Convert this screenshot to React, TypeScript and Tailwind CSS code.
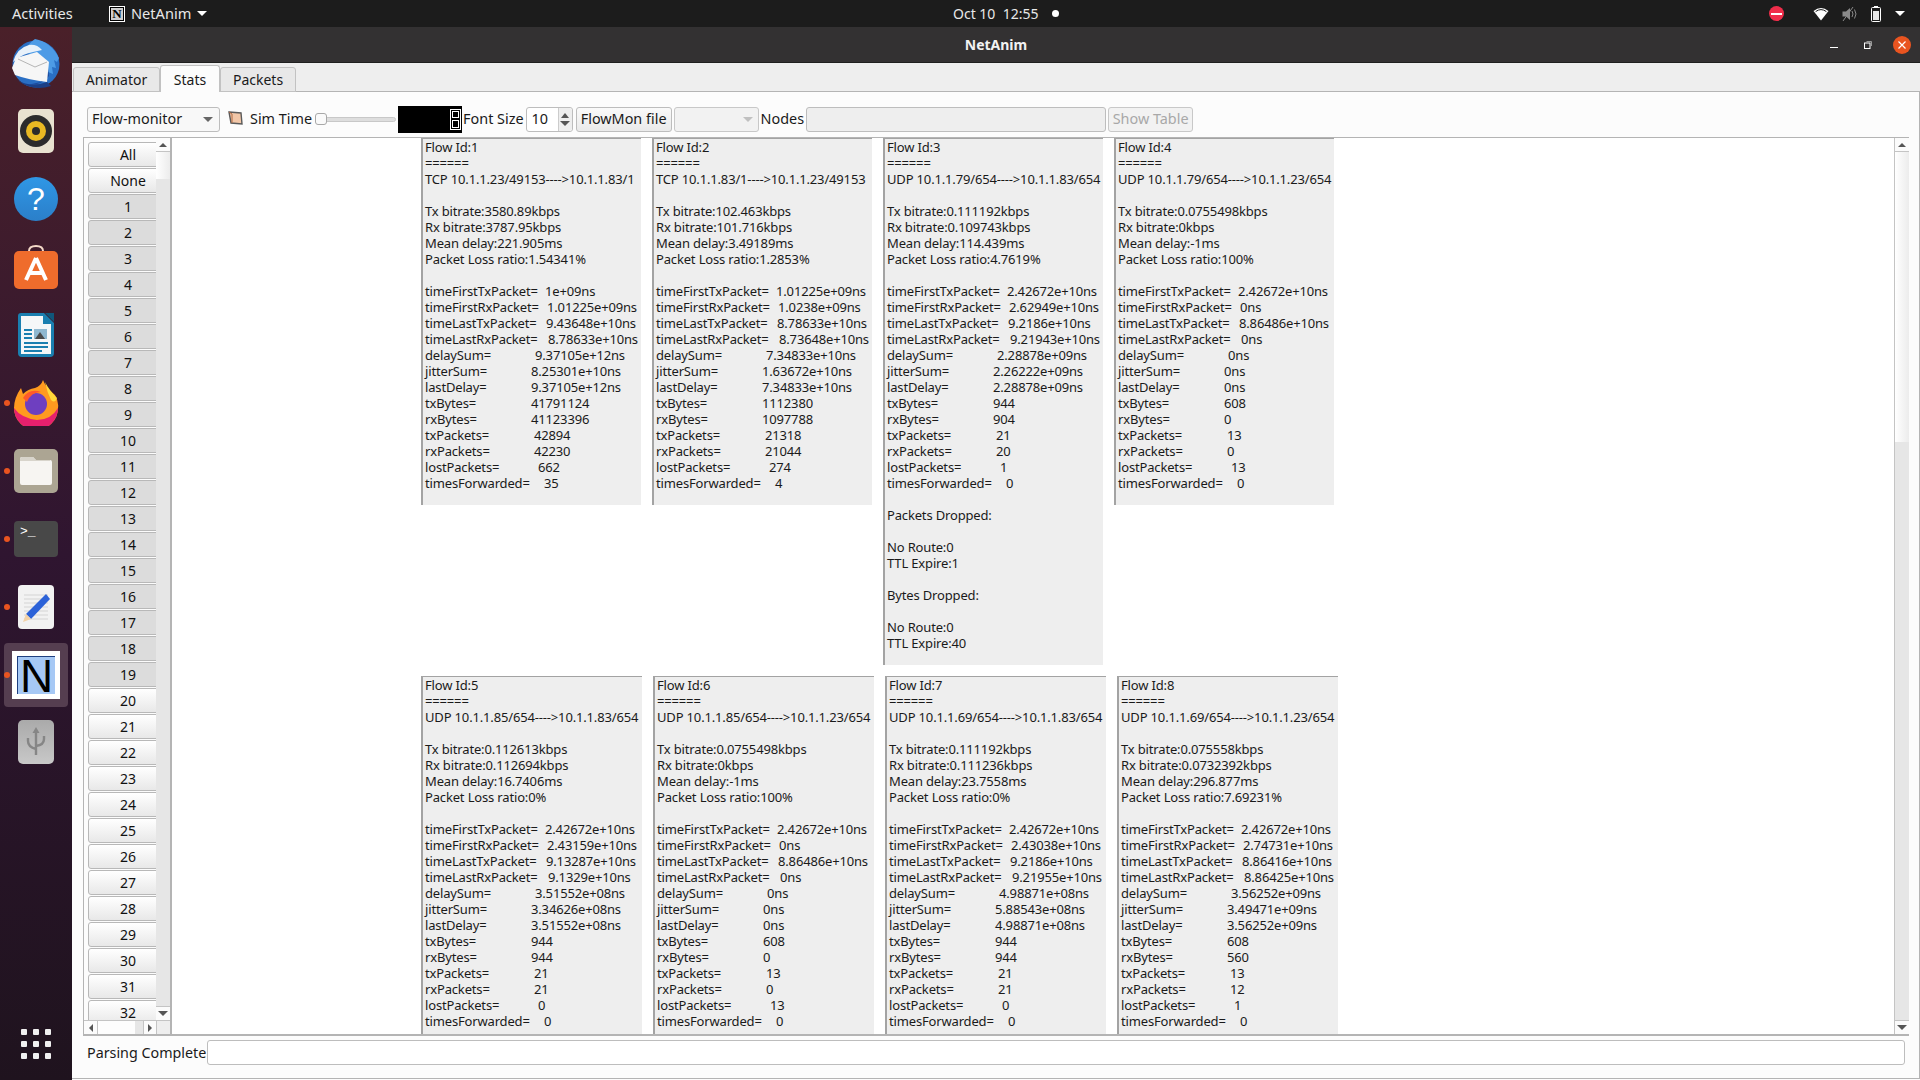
const labelWidths: Record<string, string> = {
  'timeFirstTxPacket=': 'w-[120px]',
  'timeFirstRxPacket=': 'w-[122px]',
  'timeLastTxPacket=': 'w-[121px]',
  'timeLastRxPacket=': 'w-[123px]',
  'delaySum=': 'w-[110px]',
  'jitterSum=': 'w-[106px]',
  'lastDelay=': 'w-[106px]',
  'txBytes=': 'w-[106px]',
  'rxBytes=': 'w-[106px]',
  'txPackets=': 'w-[109px]',
  'rxPackets=': 'w-[109px]',
  'lostPackets=': 'w-[113px]',
  'timesForwarded=': 'w-[119px]',
}

const statLabels = Object.keys(labelWidths)

type Flow = {
  id: number
  route: string
  tx: string
  rx: string
  delay: string
  loss: string
  stats: string[]
  dropped?: boolean
}

const flows: Flow[] = [
  { id: 1, route: 'TCP 10.1.1.23/49153---->10.1.1.83/1', tx: '3580.89', rx: '3787.95', delay: '221.905', loss: '1.54341', stats: ['1e+09ns', '1.01225e+09ns', '9.43648e+10ns', '8.78633e+10ns', '9.37105e+12ns', '8.25301e+10ns', '9.37105e+12ns', '41791124', '41123396', '42894', '42230', '662', '35'] },
  { id: 2, route: 'TCP 10.1.1.83/1---->10.1.1.23/49153', tx: '102.463', rx: '101.716', delay: '3.49189', loss: '1.2853', stats: ['1.01225e+09ns', '1.0238e+09ns', '8.78633e+10ns', '8.73648e+10ns', '7.34833e+10ns', '1.63672e+10ns', '7.34833e+10ns', '1112380', '1097788', '21318', '21044', '274', '4'] },
  { id: 3, route: 'UDP 10.1.1.79/654---->10.1.1.83/654', tx: '0.111192', rx: '0.109743', delay: '114.439', loss: '4.7619', stats: ['2.42672e+10ns', '2.62949e+10ns', '9.2186e+10ns', '9.21943e+10ns', '2.28878e+09ns', '2.26222e+09ns', '2.28878e+09ns', '944', '904', '21', '20', '1', '0'], dropped: true },
  { id: 4, route: 'UDP 10.1.1.79/654---->10.1.1.23/654', tx: '0.0755498', rx: '0', delay: '-1', loss: '100', stats: ['2.42672e+10ns', '0ns', '8.86486e+10ns', '0ns', '0ns', '0ns', '0ns', '608', '0', '13', '0', '13', '0'] },
  { id: 5, route: 'UDP 10.1.1.85/654---->10.1.1.83/654', tx: '0.112613', rx: '0.112694', delay: '16.7406', loss: '0', stats: ['2.42672e+10ns', '2.43159e+10ns', '9.13287e+10ns', '9.1329e+10ns', '3.51552e+08ns', '3.34626e+08ns', '3.51552e+08ns', '944', '944', '21', '21', '0', '0'] },
  { id: 6, route: 'UDP 10.1.1.85/654---->10.1.1.23/654', tx: '0.0755498', rx: '0', delay: '-1', loss: '100', stats: ['2.42672e+10ns', '0ns', '8.86486e+10ns', '0ns', '0ns', '0ns', '0ns', '608', '0', '13', '0', '13', '0'] },
  { id: 7, route: 'UDP 10.1.1.69/654---->10.1.1.83/654', tx: '0.111192', rx: '0.111236', delay: '23.7558', loss: '0', stats: ['2.42672e+10ns', '2.43038e+10ns', '9.2186e+10ns', '9.21955e+10ns', '4.98871e+08ns', '5.88543e+08ns', '4.98871e+08ns', '944', '944', '21', '21', '0', '0'] },
  { id: 8, route: 'UDP 10.1.1.69/654---->10.1.1.23/654', tx: '0.075558', rx: '0.0732392', delay: '296.877', loss: '7.69231', stats: ['2.42672e+10ns', '2.74731e+10ns', '8.86416e+10ns', '8.86425e+10ns', '3.56252e+09ns', '3.49471e+09ns', '3.56252e+09ns', '608', '560', '13', '12', '1', '0'] },
]

function FlowCard({ flow, className }: { flow: Flow; className: string }) {
  return (
    <div className={`shrink-0 bg-[#eeeeee] border-l-2 border-t border-[#a3a3a3] pl-[2px] text-[13px] leading-4 text-[#1a1a1a] whitespace-pre tracking-[-0.16px] ${className}`}>
      <div>Flow Id:{flow.id}</div>
      <div>======</div>
      <div>{flow.route}</div>
      <div className="h-4" />
      <div>Tx bitrate:{flow.tx}kbps</div>
      <div>Rx bitrate:{flow.rx}kbps</div>
      <div>Mean delay:{flow.delay}ms</div>
      <div>Packet Loss ratio:{flow.loss}%</div>
      <div className="h-4" />
      {statLabels.map((label, i) => (
        <div key={label} className="flex">
          <span className={`shrink-0 ${labelWidths[label]}`}>{label}</span>
          <span>{flow.stats[i]}</span>
        </div>
      ))}
      {flow.dropped && (
        <>
          <div className="h-4" />
          <div>Packets Dropped:</div>
          <div className="h-4" />
          <div>No Route:0</div>
          <div>TTL Expire:1</div>
          <div className="h-4" />
          <div>Bytes Dropped:</div>
          <div className="h-4" />
          <div>No Route:0</div>
          <div>TTL Expire:40</div>
        </>
      )}
    </div>
  )
}

function Caret({ className = '' }: { className?: string }) {
  return <span className={`inline-block w-0 h-0 border-l-[5px] border-r-[5px] border-t-[5px] border-l-transparent border-r-transparent ${className}`} />
}

function TopBar() {
  return (
    <div className="h-[27px] shrink-0 bg-[#1c1c1c] flex items-center text-[14.6px] text-[#e8e8e8] relative">
      <span className="ml-3 w-[97px]">Activities</span>
      <span className="w-4 h-4 bg-white flex items-center justify-center mr-[6px]">
        <span className="w-[14px] h-[14px] bg-[#cfcfcf] border border-black text-black text-[13px] leading-[12px] font-bold text-center font-['Liberation_Serif',serif]">N</span>
      </span>
      <span>NetAnim</span>
      <Caret className="ml-[6px] border-t-white" />
      <div className="absolute left-[953px] top-0 h-full flex items-center whitespace-pre text-[14px]">
        <span>Oct 10  12:55</span>
        <span className="ml-[14px] w-[7px] h-[7px] rounded-full bg-white" />
      </div>
      <div className="ml-auto flex items-center mr-[15px]">
        <span className="w-[15px] h-[15px] rounded-full bg-[#ef2d4a] flex items-center justify-center mr-[29px]">
          <span className="w-[11px] h-[2px] bg-white" />
        </span>
        <svg width="16" height="14" viewBox="0 0 16 14" className="mr-[13px]">
          <path d="M0.5 4 Q8 -2 15.5 4 L8 13.5 Z" fill="#fff" />
          <path d="M2.6 4.6 Q8 0.6 13.4 4.6" fill="none" stroke="#1c1c1c" strokeWidth="1" />
        </svg>
        <svg width="16" height="14" viewBox="0 0 16 14" className="mr-[13px]">
          <path d="M0.5 4.5 H4 L8 1 V13 L4 9.5 H0.5 Z" fill="#8a8a8a" />
          <path d="M10 4 Q12 7 10 10 M12.5 2.5 Q15.5 7 12.5 11.5" fill="none" stroke="#8a8a8a" />
          <path d="M1 14 L11 0" stroke="#8a8a8a" />
        </svg>
        <svg width="10" height="16" viewBox="0 0 10 16" className="mr-[14px]">
          <rect x="3" y="0" width="4" height="2" fill="#fff" />
          <rect x="0.5" y="1.5" width="9" height="14" rx="1" fill="none" stroke="#fff" />
          <rect x="2" y="5" width="6" height="9" fill="#e6e6e6" />
        </svg>
        <Caret className="border-t-white" />
      </div>
    </div>
  )
}

function DockItem({ children, dot, h = 'h-[68px]' }: { children: React.ReactNode; dot?: boolean; h?: string }) {
  return (
    <div className={`relative flex items-center justify-center shrink-0 ${h}`}>
      {dot && <span className="absolute left-[4px] top-1/2 -mt-[3px] w-[6px] h-[6px] rounded-full bg-[#e95420]" />}
      {children}
    </div>
  )
}

function Dock() {
  return (
    <div className="w-[72px] shrink-0 bg-gradient-to-b from-[#4a2029] via-[#2f1530] to-[#1f131e] flex flex-col pt-[2px] relative">
      <DockItem>
        <svg width="50" height="50" viewBox="0 0 50 50">
          <circle cx="25" cy="26" r="23.5" fill="#2a6fc4" />
          <path d="M24 1 Q40 4 48 20 L46 24 L43 22 L45 30 L41 29 L42 36 L37 34 L36 42 Q30 38 28 30 Q26 18 13 13 Q18 5 24 1 Z" fill="#4d9be6" />
          <path d="M6 42 Q20 50 36 44 L40 48 Q22 54 6 42 Z" fill="#1b3f86" />
          <path d="M16 47 Q30 48 38 38 L37 30 L30 44 Z" fill="#1d4a9c" />
          <path d="M2 24 Q6 10 18 7 Q26 6 31 12 L22 14 Q12 16 6 21 Z" fill="#e8f1fa" />
          <path d="M1 30 L5 20 L26 14 L38 24 L36 44 Q18 42 4 37 Z" fill="#f6f6f6" />
          <path d="M7 21 L24 29 L36 24" fill="none" stroke="#b5b5b5" strokeWidth="1" />
        </svg>
      </DockItem>
      <DockItem>
        <div className="w-9 h-11 rounded-[5px] bg-[#e8e2d0] flex items-center justify-center">
          <div className="w-8 h-8 rounded-full bg-[#2b2b2b] flex items-center justify-center">
            <div className="w-5 h-5 rounded-full bg-[#e8b923] flex items-center justify-center">
              <div className="w-2 h-2 rounded-full bg-[#2b2b2b]" />
            </div>
          </div>
        </div>
      </DockItem>
      <DockItem>
        <div className="w-11 h-11 rounded-full bg-gradient-to-b from-[#2f97e6] to-[#2b7fc9] flex items-center justify-center text-white text-[32px] leading-none font-['Liberation_Sans',sans-serif]">?</div>
      </DockItem>
      <DockItem>
        <svg width="44" height="46" viewBox="0 0 44 46">
          <path d="M15 10 V7 Q15 2 22 2 Q29 2 29 7 V10" fill="none" stroke="#f4d9c8" strokeWidth="2" />
          <rect x="0" y="7" width="44" height="38" rx="5" fill="#ef6c2c" />
          <path d="M22 14 L12 36 M22 14 L32 36 M15 29 H29" stroke="#fff" strokeWidth="4" fill="none" />
        </svg>
      </DockItem>
      <DockItem>
        <svg width="36" height="44" viewBox="0 0 36 44">
          <path d="M3 0 H26 L36 10 V40 Q36 44 32 44 H4 Q0 44 0 40 V3 Q0 0 3 0 Z" fill="#1a7fb0" />
          <path d="M3 3 H25 V11 H33 V41 H3 Z" fill="#f5f7f8" />
          <path d="M27 0 H36 V9 Z" fill="#10567b" />
          <rect x="6" y="16" width="8" height="2" fill="#1a7fb0" />
          <rect x="6" y="20" width="8" height="2" fill="#1a7fb0" />
          <rect x="6" y="24" width="8" height="2" fill="#1a7fb0" />
          <rect x="16" y="16" width="13" height="10" fill="#8fb8d0" />
          <path d="M17 26 L22 19 L27 26 Z" fill="#4a4a4a" />
          <rect x="6" y="29" width="24" height="2" fill="#1a7fb0" />
          <rect x="6" y="33" width="24" height="2" fill="#1a7fb0" />
          <rect x="6" y="37" width="18" height="2" fill="#1a7fb0" />
        </svg>
      </DockItem>
      <DockItem dot>
        <svg width="46" height="46" viewBox="0 0 46 46">
          <path d="M30 0 Q33 8 42 15 Q46 22 45 28 A22 22 0 0 1 1 28 Q1 18 8 8 L10 14 Q15 9 22 8 Q28 6 30 0 Z" fill="#ff9a1f" />
          <path d="M1 28 A22 22 0 0 0 45 28 Q38 40 24 40 Q8 38 1 28 Z" fill="#e6206e" />
          <circle cx="23" cy="24" r="11" fill="#6e3fc0" />
          <path d="M10 18 Q16 8 28 12 Q18 12 14 22 Z" fill="#ff5a2a" />
          <path d="M32 2 Q36 10 44 18 Q42 24 38 20 Q34 12 32 2 Z" fill="#ffd93a" />
        </svg>
      </DockItem>
      <DockItem dot>
        <div className="w-11 h-11 rounded-[5px] bg-[#aca593] flex items-center justify-center">
          <svg width="32" height="28" viewBox="0 0 32 28">
            <path d="M2 0 H13 L16 3 H30 Q32 3 32 5 V26 Q32 28 30 28 H2 Q0 28 0 26 V2 Q0 0 2 0 Z" fill="#f7f5f2" />
            <path d="M0 2 Q0 0 2 0 H13 L16 3 H30 V4 H0 Z" fill="#d8d4cb" />
          </svg>
        </div>
      </DockItem>
      <DockItem dot>
        <div className="w-11 h-[36px] rounded-[4px] bg-[#484848] text-white text-[13px] leading-none pl-[6px] pt-[4px] whitespace-pre font-['Liberation_Mono',monospace]">&gt;_</div>
      </DockItem>
      <DockItem dot>
        <svg width="36" height="44" viewBox="0 0 36 44">
          <rect width="36" height="44" rx="4" fill="#f2f2f2" />
          <path d="M6 10 H30 M6 14 H30 M6 18 H30 M6 22 H30 M6 26 H30 M6 30 H30 M6 34 H30" stroke="#d4d4d4" />
          <path d="M28 9 L32 14 L13 34 L8 29 Z" fill="#2c62d8" />
          <path d="M8 29 L13 34 L5 37 Z" fill="#f2d2a8" />
        </svg>
      </DockItem>
      <div className="relative h-[64px] shrink-0 ml-1 mr-1 mt-[2px] rounded-[4px] bg-[#553e50] flex items-center justify-center">
        <span className="absolute -left-0 top-1/2 -mt-[3px] w-[6px] h-[6px] rounded-full bg-[#e95420]" />
        <div className="w-12 h-12 bg-white flex items-center justify-center">
          <div className="w-[38px] h-[38px] bg-[#a6c8f5] border-l border-t border-[#1f3f80] flex items-center justify-center text-black text-[46px] leading-none font-['Liberation_Sans',sans-serif]">N</div>
        </div>
      </div>
      <DockItem h="h-[70px]">
        <div className="w-9 h-11 rounded-[5px] bg-gradient-to-b from-[#aaaaaa] to-[#c8c8c8] flex items-center justify-center">
          <svg width="20" height="30" viewBox="0 0 20 30" fill="none" stroke="#868686" strokeWidth="2.4">
            <path d="M10 4 V28 M10 22 Q2 20 2 14 V11 M10 19 Q18 18 18 12 V9" />
            <path d="M10 0 L6.5 6 H13.5 Z" fill="#868686" stroke="none" />
          </svg>
        </div>
      </DockItem>
      <div className="absolute left-[21px] bottom-[21px] grid grid-cols-3 gap-[6px]">
        {Array.from({ length: 9 }).map((_, i) => (
          <span key={i} className="w-[6px] h-[6px] rounded-[1px] bg-[#f0f0f0]" />
        ))}
      </div>
    </div>
  )
}

function VScrollbar({ thumb }: { thumb: string }) {
  return (
    <div className="w-[14px] h-full shrink-0 flex flex-col bg-[#e6e6e6]">
      <div className="h-[14px] shrink-0 bg-[#fbfbfb] border-b border-[#c4c4c4] flex items-center justify-center">
        <span className="w-0 h-0 border-l-[4px] border-r-[4px] border-b-[4px] border-l-transparent border-r-transparent border-b-[#555555]" />
      </div>
      <div className={`shrink-0 bg-gradient-to-r from-[#ffffff] to-[#ececec] ${thumb}`} />
      <div className="flex-1" />
      <div className="h-[14px] shrink-0 bg-[#fbfbfb] border-t border-[#c4c4c4] flex items-center justify-center">
        <Caret className="border-l-[4px] border-r-[4px] border-t-[4px] border-t-[#555555]" />
      </div>
    </div>
  )
}

function NodeList() {
  const labels = ['All', 'None', ...Array.from({ length: 32 }, (_, i) => String(i + 1))]
  return (
    <div className="w-[89px] shrink-0 border-l border-r-2 border-[#b4b4b4] flex flex-col bg-[#fcfcfc]">
      <div className="flex-1 flex min-h-0">
        <div className="w-[72px] shrink-0 overflow-hidden pl-[4px] pt-[4px] flex flex-col gap-px">
          {labels.map((label, i) => {
            const pressed = i >= 2 && i < 21
            return (
              <div
                key={label}
                className={`h-[25px] shrink-0 flex items-center justify-center pl-[9px] -mr-[3px] rounded-[3px] border border-[#b8b8b8] text-[14px] text-[#111111] ${pressed ? 'bg-[#dcdcdc]' : 'bg-gradient-to-b from-[#ffffff] to-[#e8e8e8]'}`}
              >
                {label}
              </div>
            )
          })}
        </div>
        <VScrollbar thumb="h-[27px]" />
      </div>
      <div className="h-[14px] shrink-0 flex border-t border-[#c4c4c4]">
        <div className="w-[14px] border-r border-[#c4c4c4] flex items-center justify-center bg-[#fbfbfb]">
          <span className="w-0 h-0 border-t-[4px] border-b-[4px] border-r-[4px] border-t-transparent border-b-transparent border-r-[#555555]" />
        </div>
        <div className="w-[37px] bg-[#fdfdfd]" />
        <div className="w-[8px] bg-[#e6e6e6]" />
        <div className="w-[14px] border-l border-r border-[#c4c4c4] flex items-center justify-center bg-[#fbfbfb]">
          <span className="w-0 h-0 border-t-[4px] border-b-[4px] border-l-[4px] border-t-transparent border-b-transparent border-l-[#555555]" />
        </div>
        <div className="flex-1 bg-[#eeeeee]" />
      </div>
    </div>
  )
}

function Toolbar() {
  return (
    <div className="h-[45px] shrink-0 flex items-center pl-[15px] pt-[9px] text-[14.4px] text-[#1a1a1a] whitespace-pre">
      <div className="w-[133px] h-[25px] rounded-[3px] border border-[#bdbdbd] bg-[#f8f8f8] flex items-center pl-[4px] pr-[6px] justify-between">
        <span>Flow-monitor</span>
        <Caret className="border-l-[4px] border-r-[4px] border-t-[4px] border-t-[#666666]" />
      </div>
      <svg width="15" height="14" viewBox="0 0 15 14" className="ml-[8px] -mt-[3px]">
        <path d="M1 1 L13 2 L14 13 L3 12 Z" fill="#f2c7a8" stroke="#5a5a5a" strokeWidth="1.4" />
        <path d="M1 1 L4 3 V12" stroke="#b06840" fill="none" />
      </svg>
      <span className="ml-[7px]">Sim Time</span>
      <div className="relative ml-[3px] w-[81px] h-[12px] flex items-center">
        <div className="w-full h-[5px] rounded-full bg-[#dedede] border border-[#c8c8c8]" />
        <div className="absolute left-0 top-0 w-[12px] h-[12px] rounded-[3px] bg-[#fafafa] border border-[#a8a8a8]" />
      </div>
      <div className="ml-[2px] w-[64px] h-[27px] bg-black flex items-center justify-end pr-[1px]">
        <div className="w-[11px] h-[21px] border border-white flex flex-col p-[1px] gap-[2px]">
          <span className="flex-1 border border-white" />
          <span className="flex-1 border border-white" />
        </div>
      </div>
      <span className="ml-[1px]">Font Size</span>
      <div className="ml-[2px] w-[47px] h-[25px] rounded-[3px] border border-[#bdbdbd] bg-white flex items-center">
        <span className="pl-[5px] flex-1">10</span>
        <div className="w-[14px] h-full border-l border-[#cccccc] bg-[#eeeeee] rounded-r-[3px] flex flex-col items-center justify-center gap-[3px]">
          <span className="w-0 h-0 border-l-[4px] border-r-[4px] border-b-[5px] border-l-transparent border-r-transparent border-b-[#555555]" />
          <Caret className="border-l-[4px] border-r-[4px] border-t-[5px] border-t-[#555555]" />
        </div>
      </div>
      <div className="ml-[3px] w-[96px] h-[25px] rounded-[3px] border border-[#bdbdbd] bg-gradient-to-b from-[#fafafa] to-[#eaeaea] flex items-center justify-center">FlowMon file</div>
      <div className="ml-[2px] w-[85px] h-[25px] rounded-[3px] border border-[#c8c8c8] bg-[#f2f2f2] flex items-center justify-end pr-[5px]">
        <Caret className="border-l-[4px] border-r-[4px] border-t-[4px] border-t-[#c0c0c0]" />
      </div>
      <span className="ml-[2px]">Nodes</span>
      <div className="ml-[2px] w-[300px] h-[25px] rounded-[3px] border border-[#bdbdbd] bg-[#eeeeee]" />
      <div className="ml-[2px] w-[85px] h-[25px] rounded-[3px] border border-[#c8c8c8] bg-[#f2f2f2] text-[#a8a8a8] flex items-center justify-center">Show Table</div>
    </div>
  )
}

function AppWindow() {
  return (
    <div className="flex-1 min-w-0 flex flex-col bg-[#fcfcfc] font-['Noto_Sans',sans-serif]">
      <div className="h-[36px] shrink-0 bg-[#333132] border-b border-[#1f1f1f] flex items-center relative">
        <span className="absolute left-0 right-0 text-center text-[14px] font-bold text-[#f2f2f2]">NetAnim</span>
        <div className="ml-auto flex items-center mr-[9px] relative">
          <span className="w-2 h-px bg-white mr-[26px] mt-[5px]" />
          <svg width="8" height="8" viewBox="0 0 8 8" className="mr-[21px]">
            <rect x="0.5" y="2" width="5.5" height="5.5" fill="none" stroke="#fff" />
            <path d="M2.5 0.5 H7.5 V5" fill="none" stroke="#999" />
          </svg>
          <span className="w-[18px] h-[18px] rounded-full bg-[#e95420] flex items-center justify-center">
            <svg width="8" height="8" viewBox="0 0 8 8"><path d="M0.5 0.5 L7.5 7.5 M7.5 0.5 L0.5 7.5" stroke="#fff" strokeWidth="1.2" /></svg>
          </span>
        </div>
      </div>
      <div className="h-[28px] shrink-0 bg-[#eeeeee] flex items-end pl-px text-[14px] text-[#1a1a1a] relative z-10">
        <div className="w-[87px] h-[25px] -mb-px rounded-t-[3px] border border-[#c2c2c2] bg-[#e8e8e8] flex items-center justify-center">Animator</div>
        <div className="w-[60px] h-[27px] -mb-px rounded-t-[3px] border border-b-0 border-[#c2c2c2] bg-[#fcfcfc] flex items-center justify-center">Stats</div>
        <div className="w-[76px] h-[25px] -mb-px rounded-t-[3px] border border-[#c2c2c2] bg-[#e8e8e8] flex items-center justify-center">Packets</div>
      </div>
      <div className="flex-1 min-h-0 flex flex-col border-t border-r border-b mb-px border-[#b4b4b4]">
        <Toolbar />
        <div className="flex-1 min-h-0 flex ml-[11px] mr-[10px] border-t border-b-2 border-[#b4b4b4]">
          <NodeList />
          <div className="flex-1 min-w-0 bg-white overflow-hidden pl-[249px] flex flex-col">
            <div className="flex h-[538px] shrink-0 gap-[11px]">
              {flows.slice(0, 4).map(f => (
                <FlowCard key={f.id} flow={f} className={f.dropped ? 'w-[220px] self-start h-[527px]' : 'w-[220px] self-start h-[367px]'} />
              ))}
            </div>
            <div className="flex gap-[11px] flex-1 min-h-0">
              {flows.slice(4).map(f => (
                <FlowCard key={f.id} flow={f} className="w-[221px] h-[360px]" />
              ))}
            </div>
          </div>
          <div className="border-l border-[#c4c4c4] shrink-0">
            <VScrollbar thumb="h-[290px]" />
          </div>
        </div>
        <div className="h-[42px] shrink-0 flex items-start pl-[15px] pr-[14px] pt-[4px] text-[14.3px] text-[#1a1a1a]">
          <span className="h-[25px] flex items-center mr-[1px] whitespace-pre">Parsing Complete</span>
          <div className="flex-1 h-[25px] rounded-[3px] border border-[#bdbdbd] bg-white" />
        </div>
      </div>
    </div>
  )
}

export default function App() {
  return (
    <div className="w-[1920px] h-[1080px] overflow-hidden flex flex-col font-['Noto_Sans',sans-serif]">
      <TopBar />
      <div className="flex-1 min-h-0 flex">
        <Dock />
        <AppWindow />
      </div>
    </div>
  )
}
